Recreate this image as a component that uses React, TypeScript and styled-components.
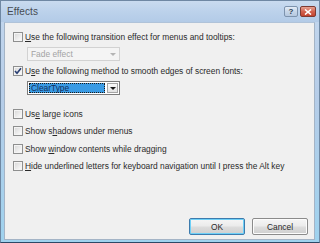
import React from 'react'
import styled, { createGlobalStyle } from 'styled-components'

const GlobalStyle = createGlobalStyle`
  html, body {
    margin: 0;
    padding: 0;
    background: #ffffff;
  }
  body {
    font-family: 'Liberation Sans', Arial, sans-serif;
  }
`

const Window = styled.div`
  width: 320px;
  height: 243px;
  box-sizing: border-box;
  display: flex;
  flex-direction: column;
  background: linear-gradient(to bottom, #c3d7ee 0%, #b6cde8 40%, #9fd2ee 100%);
  border: 1px solid #6f88a3;
  border-bottom-color: #2b4966;
  overflow: hidden;
`

const TitleBar = styled.div`
  height: 21px;
  display: flex;
  align-items: center;
  padding: 0 3px 0 6px;
  background: linear-gradient(to bottom, #c9dbef 0%, #bcd2eb 50%, #b3cbe7 100%);
`

const Title = styled.span`
  flex: 1;
  font-size: 10px;
  color: #464b52;
  letter-spacing: 0.1px;
`

const CaptionButton = styled.div<{ $close?: boolean }>`
  width: ${p => (p.$close ? '16px' : '14px')};
  height: 11px;
  margin-left: 2px;
  box-sizing: border-box;
  border: 1px solid ${p => (p.$close ? '#7d3a32' : '#7d93ad')};
  border-radius: 2px;
  display: flex;
  align-items: center;
  justify-content: center;
  background: ${p =>
    p.$close
      ? 'linear-gradient(to bottom, #e5a394 0%, #d3624f 50%, #c2432f 100%)'
      : 'linear-gradient(to bottom, #e3ecf6 0%, #c7d6e8 50%, #b5c8df 100%)'};
  font-size: 8px;
  font-weight: bold;
  color: #2c3a4c;
  line-height: 1;
`

const Client = styled.div`
  flex: 1;
  margin: 0 4px 2px 3px;
  background: #f0f0f0;
  border: 1px solid #a4b4c6;
  border-top-color: #b0c3d9;
  display: flex;
  flex-direction: column;
  padding: 7px 0 4px 8px;
  font-size: 8.4px;
  color: #2a2a2a;
`

const CheckRow = styled.label`
  display: flex;
  align-items: center;
  height: 14px;
  gap: 2px;
  white-space: nowrap;
`

const Box = styled.span`
  width: 10px;
  height: 10px;
  box-sizing: border-box;
  border: 1px solid #8e8f8f;
  background: linear-gradient(to bottom right, #d6d6d6 0%, #f2f2f2 70%, #ffffff 100%);
  box-shadow: inset 0 0 0 1px #f4f4f4;
  display: flex;
  align-items: center;
  justify-content: center;
  flex: none;
`

const Acc = styled.span`
  text-decoration: underline;
  text-underline-offset: 1px;
`

const Combo = styled.div<{ $disabled?: boolean }>`
  margin: 3px 0 3px 14px;
  width: 93px;
  height: 14px;
  box-sizing: border-box;
  border: 1px solid ${p => (p.$disabled ? '#d2d2d2' : '#7b7b7b')};
  background: ${p => (p.$disabled ? '#f4f4f4' : '#ffffff')};
  display: flex;
  align-items: center;
  padding: 1px;
  gap: 2px;
`

const ComboText = styled.div<{ $selected?: boolean; $disabled?: boolean }>`
  flex: 1;
  height: 100%;
  display: flex;
  align-items: center;
  padding-left: 2px;
  box-sizing: border-box;
  color: ${p => (p.$disabled ? '#a3a3a3' : p.$selected ? '#12305e' : '#1e1e1e')};
  background: ${p => (p.$selected ? '#3a9be4' : 'transparent')};
  outline: ${p => (p.$selected ? '1px dotted #1a1a1a' : 'none')};
  outline-offset: -1px;
`

const ComboButton = styled.div<{ $disabled?: boolean }>`
  width: 11px;
  height: 100%;
  box-sizing: border-box;
  border: 1px solid ${p => (p.$disabled ? 'transparent' : '#a5a5a5')};
  background: ${p => (p.$disabled ? 'transparent' : 'linear-gradient(#fafafa, #e2e2e2)')};
  display: flex;
  align-items: center;
  justify-content: center;
`

const Arrow = styled.span<{ $disabled?: boolean }>`
  width: 0;
  height: 0;
  border-left: 3px solid transparent;
  border-right: 3px solid transparent;
  border-top: 3px solid ${p => (p.$disabled ? '#b4b4b4' : '#1a1a1a')};
`

const CheckList = styled.div`
  margin-top: 9px;
  display: flex;
  flex-direction: column;
  gap: 3.4px;
`

const ButtonRow = styled.div`
  margin-top: auto;
  display: flex;
  justify-content: flex-end;
  gap: 7px;
  padding-right: 6px;
`

const Button = styled.button<{ $default?: boolean }>`
  width: 56px;
  height: 17px;
  box-sizing: border-box;
  border: 1px solid ${p => (p.$default ? '#3d7bad' : '#8b8b8b')};
  border-radius: 2px;
  background: linear-gradient(to bottom, #f6f6f6 0%, #ebebeb 48%, #dddddd 52%, #cfcfcf 100%);
  box-shadow: inset 0 0 0 1px ${p => (p.$default ? '#6ed0f7' : '#fcfcfc')};
  font-family: 'Liberation Sans', Arial, sans-serif;
  font-size: 8.4px;
  color: #2a2a2a;
  padding: 0;
`

const Check = () => (
  <svg width="8" height="8" viewBox="0 0 8 8">
    <path d="M1 4 L3 6.3 L7 1.2" fill="none" stroke="#2a3f73" strokeWidth="1.6" />
  </svg>
)

const CloseX = () => (
  <svg width="8" height="6" viewBox="0 0 8 6">
    <path d="M1 0.5 L7 5.5 M7 0.5 L1 5.5" stroke="#ffffff" strokeWidth="1.6" />
  </svg>
)

export default function App() {
  return (
    <>
      <GlobalStyle />
      <Window>
        <TitleBar>
          <Title>Effects</Title>
          <CaptionButton>?</CaptionButton>
          <CaptionButton $close>
            <CloseX />
          </CaptionButton>
        </TitleBar>
        <Client>
          <CheckRow>
            <Box />
            <span>
              <Acc>U</Acc>se the following transition effect for menus and tooltips:
            </span>
          </CheckRow>
          <Combo $disabled>
            <ComboText $disabled>Fade effect</ComboText>
            <ComboButton $disabled>
              <Arrow $disabled />
            </ComboButton>
          </Combo>
          <CheckRow>
            <Box>
              <Check />
            </Box>
            <span>
              U<Acc>s</Acc>e the following method to smooth edges of screen fonts:
            </span>
          </CheckRow>
          <Combo>
            <ComboText $selected>ClearType</ComboText>
            <ComboButton>
              <Arrow />
            </ComboButton>
          </Combo>
          <CheckList>
            <CheckRow>
              <Box />
              <span>
                Us<Acc>e</Acc> large icons
              </span>
            </CheckRow>
            <CheckRow>
              <Box />
              <span>
                Show s<Acc>h</Acc>adows under menus
              </span>
            </CheckRow>
            <CheckRow>
              <Box />
              <span>
                Show <Acc>w</Acc>indow contents while dragging
              </span>
            </CheckRow>
            <CheckRow>
              <Box />
              <span>
                <Acc>H</Acc>ide underlined letters for keyboard navigation until I press the Alt key
              </span>
            </CheckRow>
          </CheckList>
          <ButtonRow>
            <Button $default>OK</Button>
            <Button>Cancel</Button>
          </ButtonRow>
        </Client>
      </Window>
    </>
  )
}
